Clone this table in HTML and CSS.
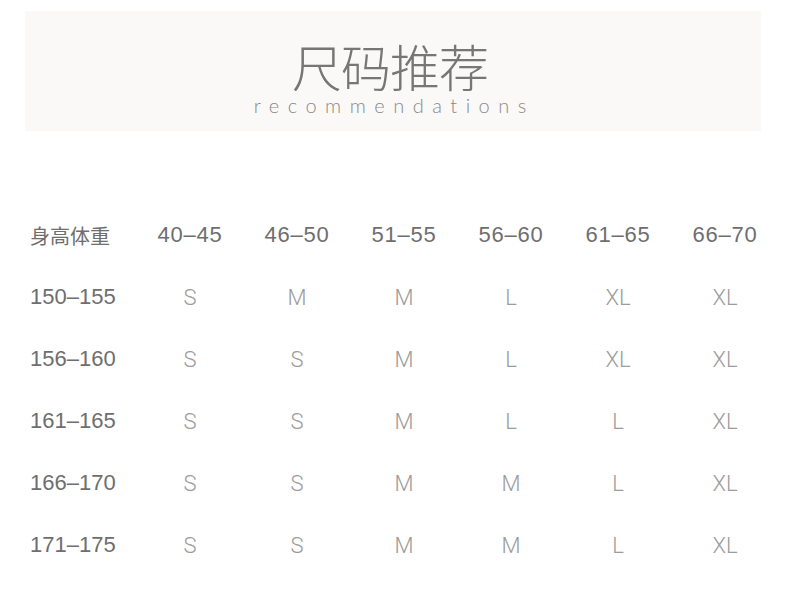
FILE: index.html
```html
<!DOCTYPE html>
<html lang="zh">
<head>
<meta charset="utf-8">
<title>尺码推荐</title>
<link rel="stylesheet" href="styles.css">
</head>
<body>
<div class="banner">
  <div class="title">尺码推荐</div>
  <div class="subtitle">recommendations</div>
</div>
<div class="chart">
  <div class="cell head label cjk">身高体重</div>
  <div class="cell head">40–45</div>
  <div class="cell head">46–50</div>
  <div class="cell head">51–55</div>
  <div class="cell head">56–60</div>
  <div class="cell head">61–65</div>
  <div class="cell head">66–70</div>

  <div class="cell label">150–155</div>
  <div class="cell size">S</div><div class="cell size">M</div><div class="cell size">M</div><div class="cell size">L</div><div class="cell size">XL</div><div class="cell size">XL</div>

  <div class="cell label">156–160</div>
  <div class="cell size">S</div><div class="cell size">S</div><div class="cell size">M</div><div class="cell size">L</div><div class="cell size">XL</div><div class="cell size">XL</div>

  <div class="cell label">161–165</div>
  <div class="cell size">S</div><div class="cell size">S</div><div class="cell size">M</div><div class="cell size">L</div><div class="cell size">L</div><div class="cell size">XL</div>

  <div class="cell label">166–170</div>
  <div class="cell size">S</div><div class="cell size">S</div><div class="cell size">M</div><div class="cell size">M</div><div class="cell size">L</div><div class="cell size">XL</div>

  <div class="cell label">171–175</div>
  <div class="cell size">S</div><div class="cell size">S</div><div class="cell size">M</div><div class="cell size">M</div><div class="cell size">L</div><div class="cell size">XL</div>
</div>
</body>
</html>
```
FILE: styles.css
```css
html, body {
  margin: 0;
  padding: 0;
  background: #ffffff;
}
body {
  width: 790px;
  height: 597px;
  overflow: hidden;
  font-family: "Liberation Sans", "Noto Sans CJK SC", sans-serif;
}
.banner {
  margin: 11px 29px 0 25px;
  height: 120px;
  background: #faf9f7;
  display: flex;
  flex-direction: column;
  align-items: center;
  box-sizing: border-box;
  padding-top: 31px;
  padding-right: 6px;
}
.title {
  font-family: "Noto Sans CJK SC", sans-serif;
  font-weight: 300;
  font-size: 50px;
  line-height: 46px;
  color: #767676;
  letter-spacing: -1px;
}
.subtitle {
  margin-top: 7px;
  font-family: "Lato", "Liberation Sans", sans-serif;
  font-weight: 300;
  font-size: 20px;
  line-height: 20px;
  color: #8a8a8a;
  letter-spacing: 8.5px;
  margin-right: -8.5px;
}
.chart {
  margin-top: 73px;
  padding-left: 30px;
  display: grid;
  grid-template-columns: 106.5px repeat(6, 107px);
  grid-auto-rows: 62px;
}
.cell {
  display: flex;
  align-items: center;
  justify-content: center;
  white-space: nowrap;
}
.head {
  font-size: 22px;
  color: #6e6e6e;
  letter-spacing: 0.8px;
}
.label {
  justify-content: flex-start;
  font-size: 22px;
  color: #6e6e6e;
  letter-spacing: 0;
}
.cjk {
  font-family: "Noto Sans CJK SC", sans-serif;
  font-size: 20px;
}
.size {
  font-family: "Roboto", "Liberation Sans", sans-serif;
  font-weight: 300;
  font-size: 22px;
  color: #9c9c9c;
}
```
